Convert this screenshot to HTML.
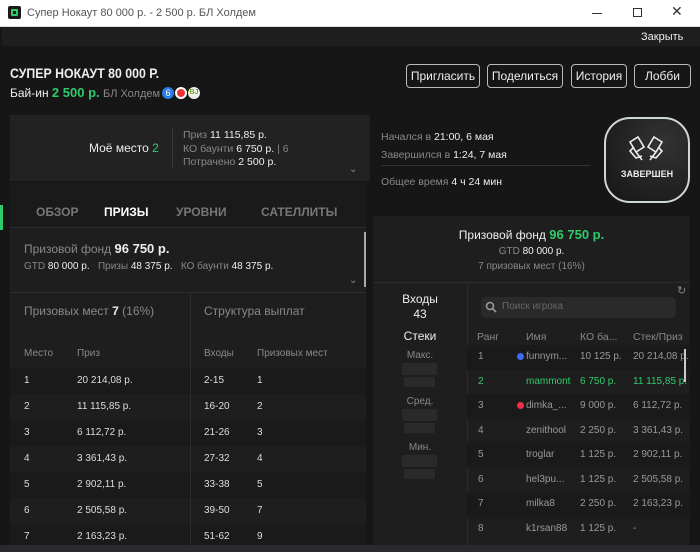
<!DOCTYPE html>
<html><head><meta charset="utf-8"><style>
*{margin:0;padding:0;box-sizing:border-box}
body{width:700px;height:552px;overflow:hidden;background:#161616;font-family:"Liberation Sans",sans-serif;color:#ddd;position:relative;font-size:11px}
.a{position:absolute}
.g{color:#888}.w{color:#eee}.gr{color:#2fcb6a}
.btn{position:absolute;top:64px;height:24px;border:1px solid #bbb;border-radius:4px;color:#eee;font-size:12px;line-height:22px;text-align:center}
.row{position:absolute;height:26px;line-height:26px;font-size:10px;color:#ddd}
.tr{position:absolute;left:467px;width:223px;height:24.5px;line-height:24.5px;font-size:10px;color:#999}
.tr span,.row span{position:absolute}
</style></head><body>
<div class="a" style="left:0;top:0;width:700px;height:27px;background:#fff;border-bottom:1px solid #ddd"></div>
<div class="a" style="left:8px;top:6px;width:13px;height:13px;background:#1a1a1a;border-radius:2px"><div class="a" style="left:3px;top:3px;width:7px;height:7px;border:2px solid #2fcb6a;border-radius:1px"></div></div>
<div class="a" style="left:27px;top:7px;color:#555;font-size:11px">Супер Нокаут 80 000 р. - 2 500 р. БЛ Холдем</div>
<div class="a" style="left:592px;top:13px;width:10px;height:1px;background:#333"></div>
<div class="a" style="left:633px;top:8px;width:9px;height:9px;border:1px solid #333"></div>
<div class="a" style="left:671px;top:3px;color:#333;font-size:14px">✕</div>
<div class="a" style="left:2px;top:27px;width:698px;height:19px;background:#1e1e1e"></div>
<div class="a w" style="left:641px;top:31px;font-size:11px">Закрыть</div>
<div class="a" style="left:0;top:205px;width:3px;height:25px;background:#2fcb6a"></div>
<div class="a w" style="left:10px;top:65px;font-size:14px;font-weight:bold;transform:scaleX(0.88);transform-origin:left;white-space:nowrap">СУПЕР НОКАУТ 80 000 Р.</div>
<div class="a" style="left:10px;top:85px;font-size:12px"><span class="w">Бай-ин</span> <b class="gr" style="font-size:13px">2 500 р.</b> <span class="g" style="font-size:11px">БЛ Холдем</span></div>
<div class="a" style="left:162px;top:87px;width:12px;height:12px;border-radius:50%;background:#2a7de1;color:#fff;font-size:9px;text-align:center;line-height:12px">6</div>
<div class="a" style="left:175px;top:87px;width:12px;height:12px;border-radius:50%;background:#e33;border:2px solid #fff"></div>
<div class="a" style="left:188px;top:87px;width:12px;height:12px;border-radius:50%;background:#eee;color:#7a2;font-size:7px;font-weight:bold;text-align:center;line-height:12px">BJ</div>
<div class="btn" style="left:406px;width:74px">Пригласить</div>
<div class="btn" style="left:487px;width:76px">Поделиться</div>
<div class="btn" style="left:571px;width:56px">История</div>
<div class="btn" style="left:634px;width:57px">Лобби</div>
<div class="a" style="left:10px;top:115px;width:360px;height:66px;background:#222"></div>
<div class="a w" style="left:89px;top:141px;font-size:12px">Моё место <span class="gr">2</span></div>
<div class="a" style="left:172px;top:128px;width:1px;height:40px;background:#3a3a3a"></div>
<div class="a" style="left:183px;top:129px;font-size:10.5px;line-height:13.5px"><span class="g">Приз</span> <span class="w">11 115,85 р.</span><br><span class="g">КО баунти</span> <span class="w">6 750 р.</span> <span class="g">| 6</span><br><span class="g">Потрачено</span> <span class="w">2 500 р.</span></div>
<div class="a g" style="left:349px;top:164px;font-size:10px">⌄</div>
<div class="a" style="left:381px;top:128px;font-size:10.5px;line-height:18px"><span class="g">Начался в</span> <span class="w">21:00, 6 мая</span><br><span class="g">Завершился в</span> <span class="w">1:24, 7 мая</span></div>
<div class="a" style="left:381px;top:165px;width:209px;height:1px;background:#333"></div>
<div class="a" style="left:381px;top:176px;font-size:10.5px"><span class="g">Общее время</span> <span class="w">4 ч 24 мин</span></div>
<div class="a" style="left:604px;top:117px;width:86px;height:86px;border:2px solid #cfd6d6;border-radius:26px;background:radial-gradient(circle at 70% 30%,#333,#151515)"></div>
<svg class="a" style="left:626px;top:136px" width="40" height="28" viewBox="0 0 40 28" fill="none" stroke="#eee" stroke-width="1.6"><path d="M4 6l8-5 6 10-8 5z M10 16l6 8M8 11l-4 4 6 7 6-2"/><path d="M36 6l-8-5-6 10 8 5z M30 16l-6 8M32 11l4 4-6 7-6-2"/></svg>
<div class="a w" style="left:604px;top:169px;width:86px;text-align:center;font-size:9px;font-weight:bold">ЗАВЕРШЕН</div>
<div class="a" style="left:10px;top:182px;width:356px;height:363px;background:#1e1e1e"></div>
<div class="a" style="left:10px;top:182px;width:356px;height:46px;background:#1a1a1a;border-bottom:1px solid #2c2c2c"></div>
<div class="a" style="left:36px;top:205px;font-size:12px;font-weight:bold;color:#777">ОБЗОР</div>
<div class="a" style="left:104px;top:205px;font-size:12px;font-weight:bold;color:#fff">ПРИЗЫ</div>
<div class="a" style="left:176px;top:205px;font-size:12px;font-weight:bold;color:#777">УРОВНИ</div>
<div class="a" style="left:261px;top:205px;font-size:12px;font-weight:bold;color:#777">САТЕЛЛИТЫ</div>
<div class="a" style="left:24px;top:241px;font-size:12px"><span class="g">Призовой фонд</span> <b class="w" style="font-size:13px">96 750 р.</b></div>
<div class="a" style="left:24px;top:261px;font-size:10px"><span class="g">GTD</span> <span class="w">80 000 р.</span> &nbsp; <span class="g">Призы</span> <span class="w">48 375 р.</span> &nbsp; <span class="g">КО баунти</span> <span class="w">48 375 р.</span></div>
<div class="a" style="left:364px;top:232px;width:2px;height:55px;background:#aaa"></div>
<div class="a g" style="left:349px;top:275px;font-size:10px">⌄</div>
<div class="a" style="left:10px;top:292px;width:356px;height:1px;background:#2c2c2c"></div>
<div class="a" style="left:190px;top:292px;width:1px;height:253px;background:#2c2c2c"></div>
<div class="a" style="left:24px;top:304px;font-size:12px"><span class="g">Призовых мест</span> <b class="w">7</b> <span class="g">(16%)</span></div>
<div class="a g" style="left:204px;top:304px;font-size:12px">Структура выплат</div>
<div class="a g" style="left:24px;top:348px;font-size:10px">Место</div>
<div class="a g" style="left:77px;top:348px;font-size:10px">Приз</div>
<div class="a g" style="left:204px;top:348px;font-size:10px">Входы</div>
<div class="a g" style="left:257px;top:348px;font-size:10px">Призовых мест</div>
<div class="row" style="left:10px;top:368px;width:356px;background:#1a1a1a"><span style="left:14px">1</span><span style="left:67px">20 214,08 р.</span><span style="left:194px">2-15</span><span style="left:247px">1</span></div>
<div class="row" style="left:10px;top:394px;width:356px"><span style="left:14px">2</span><span style="left:67px">11 115,85 р.</span><span style="left:194px">16-20</span><span style="left:247px">2</span></div>
<div class="row" style="left:10px;top:420px;width:356px;background:#1a1a1a"><span style="left:14px">3</span><span style="left:67px">6 112,72 р.</span><span style="left:194px">21-26</span><span style="left:247px">3</span></div>
<div class="row" style="left:10px;top:446px;width:356px"><span style="left:14px">4</span><span style="left:67px">3 361,43 р.</span><span style="left:194px">27-32</span><span style="left:247px">4</span></div>
<div class="row" style="left:10px;top:472px;width:356px;background:#1a1a1a"><span style="left:14px">5</span><span style="left:67px">2 902,11 р.</span><span style="left:194px">33-38</span><span style="left:247px">5</span></div>
<div class="row" style="left:10px;top:498px;width:356px"><span style="left:14px">6</span><span style="left:67px">2 505,58 р.</span><span style="left:194px">39-50</span><span style="left:247px">7</span></div>
<div class="row" style="left:10px;top:524px;width:356px;height:21px;background:#1a1a1a"><span style="left:14px">7</span><span style="left:67px">2 163,23 р.</span><span style="left:194px">51-62</span><span style="left:247px">9</span></div>
<div class="a" style="left:190px;top:368px;width:1px;height:177px;background:#2c2c2c"></div>
<div class="a" style="left:373px;top:216px;width:317px;height:329px;background:#1e1e1e"></div>
<div class="a" style="left:373px;top:227px;width:317px;text-align:center;font-size:12px"><span class="w">Призовой фонд</span> <b class="gr" style="font-size:13px">96 750 р.</b></div>
<div class="a" style="left:373px;top:246px;width:317px;text-align:center;font-size:10px"><span class="g">GTD</span> <span class="w">80 000 р.</span></div>
<div class="a g" style="left:373px;top:261px;width:317px;text-align:center;font-size:10px">7 призовых мест (16%)</div>
<div class="a" style="left:373px;top:282px;width:317px;height:1px;background:#2c2c2c"></div>
<div class="a" style="left:467px;top:283px;width:1px;height:262px;background:#2c2c2c"></div>
<div class="a w" style="left:373px;top:292px;width:94px;text-align:center;font-size:12px;line-height:15px">Входы<br>43</div>
<div class="a w" style="left:373px;top:329px;width:94px;text-align:center;font-size:12px">Стеки</div>
<div class="a g" style="left:373px;top:350px;width:94px;text-align:center;font-size:10px">Макс.</div>
<div class="a" style="left:402px;top:363px;width:35px;height:12px;background:#2a2a2a;border-radius:2px"></div><div class="a" style="left:404px;top:377px;width:31px;height:10px;background:#2a2a2a"></div>
<div class="a g" style="left:373px;top:396px;width:94px;text-align:center;font-size:10px">Сред.</div>
<div class="a" style="left:402px;top:409px;width:35px;height:12px;background:#2a2a2a;border-radius:2px"></div><div class="a" style="left:404px;top:423px;width:31px;height:10px;background:#2a2a2a"></div>
<div class="a g" style="left:373px;top:442px;width:94px;text-align:center;font-size:10px">Мин.</div>
<div class="a" style="left:402px;top:455px;width:35px;height:12px;background:#2a2a2a;border-radius:2px"></div><div class="a" style="left:404px;top:469px;width:31px;height:10px;background:#2a2a2a"></div>
<div class="a g" style="left:677px;top:284px;font-size:11px">↻</div>
<div class="a" style="left:481px;top:297px;width:195px;height:21px;background:#2a2a2a;border-radius:5px"></div>
<svg class="a" style="left:485px;top:301px" width="12" height="12" viewBox="0 0 12 12" fill="none" stroke="#999" stroke-width="1.6"><circle cx="5" cy="5" r="3.5"/><path d="M7.5 7.5L11 11"/></svg>
<div class="a" style="left:502px;top:301px;font-size:10px;color:#666">Поиск игрока</div>
<div class="a g" style="left:477px;top:331px;font-size:10.5px">Ранг</div>
<div class="a g" style="left:526px;top:331px;font-size:10.5px">Имя</div>
<div class="a g" style="left:580px;top:331px;font-size:10.5px">КО ба...</div>
<div class="a g" style="left:633px;top:331px;font-size:10.5px">Стек/Приз</div>
<div class="tr" style="top:345px;background:#1a1a1a"><span style="left:11px">1</span><span style="left:59px">funnym...</span><span style="left:113px">10 125 р.</span><span style="left:166px">20 214,08 р.</span></div>
<div class="a" style="left:517px;top:353px;width:7px;height:7px;border-radius:50%;background:#3b6cf5"></div>
<div class="tr gr" style="top:369.5px;color:#2fcb6a"><span style="left:11px">2</span><span style="left:59px">mammont</span><span style="left:113px">6 750 р.</span><span style="left:166px">11 115,85 р.</span></div>
<div class="tr" style="top:394px;background:#1a1a1a"><span style="left:11px">3</span><span style="left:59px">dimka_...</span><span style="left:113px">9 000 р.</span><span style="left:166px">6 112,72 р.</span></div>
<div class="a" style="left:517px;top:402px;width:7px;height:7px;border-radius:50%;background:#f0304a"></div>
<div class="tr" style="top:418.5px"><span style="left:11px">4</span><span style="left:59px">zenithool</span><span style="left:113px">2 250 р.</span><span style="left:166px">3 361,43 р.</span></div>
<div class="tr" style="top:443px;background:#1a1a1a"><span style="left:11px">5</span><span style="left:59px">troglar</span><span style="left:113px">1 125 р.</span><span style="left:166px">2 902,11 р.</span></div>
<div class="tr" style="top:467.5px"><span style="left:11px">6</span><span style="left:59px">hel3pu...</span><span style="left:113px">1 125 р.</span><span style="left:166px">2 505,58 р.</span></div>
<div class="tr" style="top:492px;background:#1a1a1a"><span style="left:11px">7</span><span style="left:59px">milka8</span><span style="left:113px">2 250 р.</span><span style="left:166px">2 163,23 р.</span></div>
<div class="tr" style="top:516.5px"><span style="left:11px">8</span><span style="left:59px">k1rsan88</span><span style="left:113px">1 125 р.</span><span style="left:166px">-</span></div>
<div class="a" style="left:684px;top:349px;width:2px;height:33px;background:#ccc"></div>
<div class="a" style="left:0;top:545px;width:700px;height:7px;background:#2a2a2e"></div>
</body></html>
